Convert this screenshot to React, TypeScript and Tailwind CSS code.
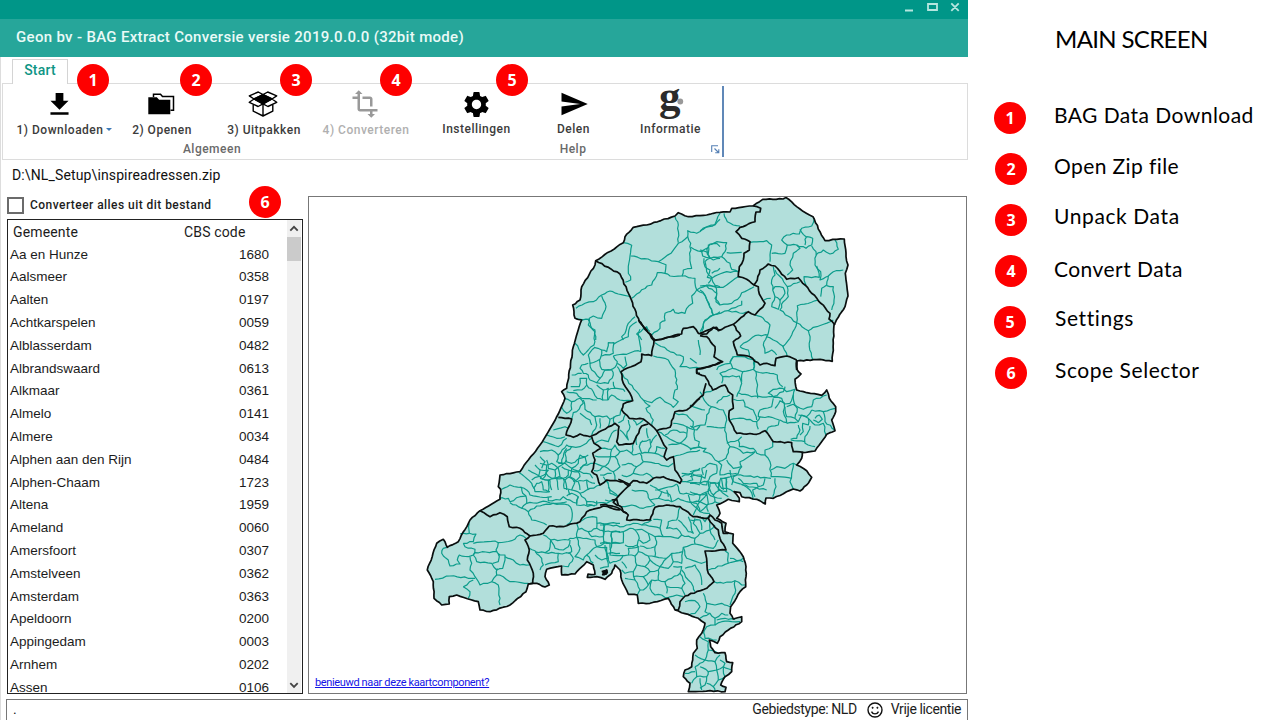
import React from "react";
import { MdFileDownload, MdSettings, MdSend, MdTransform } from "react-icons/md";

type Sheet = { x: number; y: number; municipal: string[]; provincial: string[] };

// Each sheet holds border lines in thirds of a pixel, relative to its own origin.
const sheets: Sheet[] = [
  {
    x: 560,
    y: 190,
    provincial: [
      "107,212 180,252 210,320 238,395 285,450",
      "285,450 365,432 370,415 400,410 415,430 440,432 460,412 480,420",
    ],
    municipal: [
      "190,158 215,166 210,198 205,240 212,270 196,277",
      "212,198 295,215 318,224 315,250 292,248 275,285 262,288 215,325",
      "345,80 355,105 355,158",
      "295,215 333,190 355,160 383,140 383,122 410,130 440,110 465,105 480,88",
      "383,140 392,160 390,200 395,235 370,240 366,258 330,258 315,250",
      "366,258 405,265 410,300 440,285 480,290",
      "392,172 425,185 440,175 450,205 435,215 440,245 455,262 445,280",
      "425,185 428,198 460,210 480,205",
      "440,178 450,162 470,160 480,170",
      "455,250 480,235",
      "440,288 470,310 468,335 480,345",
      "410,300 430,310 445,340 460,375 480,365",
      "410,300 395,318 398,340 380,355 375,370 345,368 340,358 315,370 315,392 300,400 300,415 275,435",
      "460,375 432,395 420,425",
      "48,355 75,340 100,335 125,315 150,303 175,312 212,320",
      "125,318 138,350 125,385 100,378 88,385 85,405 105,420 107,450",
      "48,387 88,388",
      "225,380 205,400 195,430 185,440 190,450",
      "240,418 230,432 245,450",
    ],
  },
  {
    x: 700,
    y: 190,
    provincial: [
      "160,48 182,55 180,66 168,66 165,95 120,112 108,125 125,145 150,155 148,180 132,190 130,210 118,230 115,260 140,268 162,285 175,290 178,312 195,340 188,352 165,375 145,365 100,403 75,412 55,422 50,412 30,418 0,430",
      "162,285 172,270 180,240 205,222 225,228 260,268 295,263 390,370 387,387 405,405",
      "100,403 122,438 100,455 112,495 150,500 180,525 200,520 225,527 228,505 260,498 290,510",
      "0,437 20,440 45,470 42,500 68,515 30,530 0,537",
      "290,510 290,540",
    ],
    municipal: [
      "0,122 45,103 60,70",
      "72,70 82,95 100,105 120,108",
      "150,157 200,152 215,165 210,215",
      "215,190 255,190 262,165 290,165 318,175 335,165 338,145 320,140 315,148 315,165",
      "262,165 245,150 260,135 280,130 298,132 305,115 335,108 343,85",
      "300,118 318,140",
      "290,165 300,175 280,190 270,225 278,240 262,255",
      "335,168 348,185 345,225 362,245 360,270 385,258 400,245 430,240",
      "348,195 370,180 390,192 415,178 405,150",
      "350,228 358,262 312,260 318,285",
      "385,258 380,285 365,295 362,320",
      "380,287 400,290 402,330 395,360",
      "0,180 25,190 25,165 50,155 80,158 75,185 65,200 30,205 20,190",
      "80,188 125,187",
      "65,200 90,220 95,238 115,245",
      "12,205 15,230 30,240 22,262 35,265 80,245 115,245",
      "0,288 35,288 70,292 115,260",
      "35,265 45,285 50,310 45,325 60,345 95,340 120,320 125,308 162,290",
      "0,300 15,315 35,360 40,375 15,390 5,425",
      "40,375 85,362 95,355 125,345 125,332",
      "85,362 130,370 140,365",
      "220,230 225,255 215,270 218,300 225,290 250,293 255,310 240,330 225,320 218,300",
      "225,320 215,350 235,358 240,330",
      "225,240 258,285 262,290 300,275",
      "192,330 212,325",
      "262,290 265,320 250,335 240,360 290,398 325,422 340,412 400,390",
      "355,330 292,347 290,398 275,435 248,470",
      "325,422 330,450 328,470 338,508",
      "165,375 190,385 210,405 205,430 200,440 220,450 248,468 262,500",
      "205,435 165,437 130,460 120,470",
      "200,440 190,465 195,490 215,480 230,495",
      "120,470 145,480 148,500",
      "100,500 90,520 55,530 50,540",
      "100,500 125,500 165,510 160,540",
    ],
  },
  {
    x: 540,
    y: 320,
    provincial: [
      "295,0 342,62 335,107 305,102 303,125 243,155 250,190 270,220 278,242 250,252 245,270 268,295 310,297 350,332 390,322 405,275 440,270 480,235",
      "342,62 420,45",
      "55,292 95,297 78,345 100,352 120,342 150,350 195,328 225,310 237,320 230,365 237,375 280,370 305,318 325,312",
      "155,350 162,370 183,385 158,400 165,420 160,445 155,455 170,465 180,495 200,480 250,485 265,497 280,482 320,490 340,475 370,470 420,490 425,480 405,450 400,410 380,420 372,410 380,385 372,375 360,350 350,332",
      "480,147 470,147 470,160 480,160",
    ],
    municipal: [
      "145,0 152,18 165,35 162,75 145,90 130,105 105,70",
      "162,82 185,90 180,118 150,130 145,105 165,82",
      "185,90 200,95 205,68 222,68 220,100 185,108",
      "222,72 265,50 270,20 290,5",
      "220,108 260,103 295,92 303,95",
      "220,108 232,125 225,142 210,150 185,148 178,118",
      "295,40 302,95",
      "232,130 250,145 260,135 255,110",
      "295,40 320,20 330,35",
      "232,140 240,155 310,240 335,248 360,232 400,262 415,245 400,235 405,210 412,208 405,150 385,120 340,108",
      "345,68 410,105 430,110 428,128 420,140 480,145",
      "310,240 330,258 318,265 340,300 335,318",
      "150,130 155,150 180,175 170,188 150,180 145,165 130,160 120,145 125,135 145,130",
      "180,175 195,150 215,150 220,165 205,190 170,188",
      "95,165 125,160",
      "92,200 118,200 120,175 140,175 140,195 125,210 100,212",
      "140,195 160,215 172,235 188,240 190,210 170,195",
      "190,210 205,205 203,240 188,240",
      "203,210 225,205 220,185",
      "220,205 250,208 255,215",
      "205,240 215,225 240,240 275,242",
      "72,235 95,245 95,268 80,280 65,262",
      "95,245 120,235 130,250 110,275 100,278 95,297",
      "130,240 135,268 165,290 200,288 210,298 240,285 245,265",
      "80,215 110,220 125,235 170,240",
      "165,290 170,315 155,345",
      "180,295 180,325",
      "120,280 150,300 155,315",
      "210,298 205,320",
      "222,290 222,310",
      "255,285 250,300 235,308",
      "265,300 270,320 260,345 265,360 240,330",
      "280,300 290,315 310,300",
      "40,330 75,320 85,325",
      "20,345 50,355 75,350",
      "10,365 55,380 80,355",
      "0,395 35,390 55,405 80,375 95,380 120,380 130,375 155,355",
      "55,405 50,425 65,430 70,410 80,385",
      "95,380 75,400 78,425 95,430 120,415 145,405",
      "0,430 20,435 35,430 55,445 60,470 35,475 18,460 20,435",
      "55,430 75,430 95,445 115,430 120,405 135,410 140,430 120,445",
      "95,445 90,470 75,480 55,470",
      "95,445 130,460 150,462 158,475",
      "90,470 110,485 140,480 165,490",
      "0,475 30,482 35,510",
      "20,460 0,470",
      "50,475 55,510",
      "75,480 80,510",
      "115,485 120,510",
      "140,480 145,510",
      "165,370 185,360 205,365 215,340 230,330",
      "183,385 215,388 225,375 240,395 225,410 165,408",
      "225,410 240,440 220,455 195,440 165,430",
      "215,388 205,430 180,450 162,452",
      "240,395 260,390 280,405 300,400 310,425 290,440 265,430 245,435",
      "280,370 275,400",
      "300,370 305,365 330,358 333,380 325,398 305,400 298,380 308,362",
      "325,398 345,400 370,410",
      "333,370 345,350 350,345",
      "320,325 325,355",
      "290,345 290,375",
      "310,425 345,430 385,440 400,430",
      "290,440 280,460 300,465 320,460 340,475",
      "220,455 225,480",
      "245,465 260,470 280,460",
      "345,400 350,380 375,385",
      "180,465 215,460",
      "355,335 380,350 420,370 440,350 440,320 400,310",
      "440,320 470,330 480,318",
      "405,280 440,285 460,305 455,325",
      "375,345 400,330 440,340",
      "385,375 420,370 450,385 480,380",
      "400,410 420,405 480,390",
      "425,460 455,460 480,445",
      "455,460 458,480 440,485",
      "0,410 15,425 5,445",
    ],
  },
  {
    x: 690,
    y: 340,
    provincial: [
      "20,88 20,98 45,108 68,150 105,135 115,155 128,165 130,205 118,212 118,240 140,280 200,283 225,272 250,305 305,308 310,335 340,337",
      "95,65 75,75 20,88",
      "48,130 40,165 0,200",
    ],
    municipal: [
      "130,50 120,65 128,85 158,95 190,88 193,60",
      "128,85 105,95 90,100 98,110 95,130",
      "98,110 148,108 155,130 140,170",
      "158,95 155,125",
      "190,88 198,95 200,125 203,175",
      "198,95 240,100 262,105 265,125 278,140",
      "145,158 185,170 250,170 280,155 285,140",
      "250,170 235,160 250,148 278,145 290,155 315,148 310,165 300,190 285,192 275,175 250,172",
      "130,178 160,180 165,200 190,210 200,240",
      "250,175 245,200 210,210 205,230 245,232 268,240 265,255 235,262 230,280",
      "120,240 160,235 200,245 205,268",
      "200,245 210,230",
      "255,205 270,182 283,190 280,215 290,248 270,240",
      "290,200 310,193 322,205 315,235 325,245 290,250",
      "285,200 290,230 315,235",
      "310,165 315,195 340,208 365,200 370,180 410,165",
      "365,210 350,230 325,225",
      "365,210 400,215 435,205",
      "375,235 388,225 397,238 385,248 370,240",
      "325,245 335,225 355,235 355,255 338,250 340,275 330,285",
      "355,235 375,255 400,250 408,285",
      "400,215 405,245 435,270",
      "325,255 330,270 320,295 302,298",
      "360,258 355,275 345,290 345,310 375,320",
      "302,300 345,305",
      "25,0 30,45",
      "0,55 20,70",
      "30,155 50,190 65,200 50,225 45,255 10,262 0,258",
      "40,160 70,150",
      "0,195 45,210",
      "65,200 100,210 110,240 105,262 50,260",
      "80,190 100,170 120,165",
      "105,262 110,300 120,320 108,355 85,365 75,360 65,345 40,335 48,325 20,322 0,330",
      "10,262 15,300 28,305 25,320",
      "110,310 145,300 155,290",
      "145,300 148,320 190,325 200,340 225,345 225,330 248,320 248,305",
      "120,320 150,330 160,340 195,335",
      "195,335 150,365 155,380 130,385 110,360",
      "225,345 240,365 243,410",
      "243,390 260,380 285,385 310,370 320,375",
      "310,370 305,400 300,425 310,447",
      "243,410 305,415",
      "90,415 140,405 243,415",
      "155,380 145,400 130,410 125,435",
      "85,365 95,375 90,405 115,400 140,400",
      "35,385 60,370 80,375 80,400 60,410 50,435 30,430 35,405 0,410",
      "35,385 40,405",
      "0,395 30,390",
      "60,430 85,430 95,445 110,445 108,415 90,420 88,435",
      "60,430 55,460 70,470 95,475",
      "35,480 50,460 55,490 30,515 20,500 35,480",
      "110,445 130,455",
      "145,415 160,430 200,430 205,440 188,450 195,470",
      "205,440 220,435 225,415",
      "255,415 258,440 248,470",
      "0,455 30,465 50,460",
      "0,485 20,490 30,515 60,520",
      "0,430 30,435",
      "30,530 45,545 60,525",
      "0,540 30,540 35,570",
      "60,545 60,570",
    ],
  },
  {
    x: 420,
    y: 460,
    provincial: [
      "180,152 210,170 240,158 262,170 268,200 300,205 330,228 370,220 388,198 430,200 480,185 500,155 550,138 600,150",
      "330,228 315,240 328,270 322,300 340,340 338,370 325,372",
      "575,120 590,118 595,135",
      "545,335 560,332 558,342 548,344 552,336",
    ],
    municipal: [
      "148,190 148,220 168,222 160,245 130,250",
      "148,220 120,222",
      "130,250 135,260 165,268 160,285 145,290 118,285 112,300 120,312 90,318 85,300 65,280 70,265 80,262",
      "160,250 225,243 235,248 275,242 300,225 318,235",
      "235,248 228,270 240,285 255,285 255,300 248,325 230,330 215,310 170,305 160,285 165,278 230,275 238,290 235,305 218,310",
      "150,290 155,310 150,330 165,350 180,375 215,365 230,345 232,325",
      "255,290 280,300 300,315 328,315",
      "45,358 90,348 155,355 165,355",
      "130,380 160,360",
      "130,380 150,395 145,415",
      "215,365 235,375 240,435",
      "230,345 250,350 270,365 325,370",
      "245,88 270,75 305,82 308,100 318,108",
      "238,115 265,115 270,125 300,110 318,108 320,130 305,145 270,128",
      "300,82 320,90 330,105 380,112 395,110",
      "320,130 380,125 400,130 440,125",
      "325,155 350,138 400,130 445,135 455,150 455,180 440,195",
      "305,145 325,155 335,180 380,195",
      "298,38 335,70 345,95 390,95",
      "325,30 365,55 385,60 385,95 370,90 365,65 350,70 340,85",
      "345,15 360,30 355,50 335,60",
      "380,0 385,25 405,30 405,55 385,60",
      "405,30 425,15 440,0",
      "405,55 430,55 445,45 445,30 425,20",
      "360,30 385,30 370,55",
      "430,55 432,85 455,90 465,65 445,50",
      "445,30 475,35 480,50 460,65",
      "475,35 490,15 525,10",
      "455,90 480,100 500,90 540,75",
      "385,112 385,122 420,120 430,110 440,118 470,130 475,110 455,100 440,108",
      "480,100 500,125 560,130 575,120",
      "475,110 470,135 525,138",
      "500,122 500,135 530,135 530,122",
      "560,60 570,90 595,110",
      "445,88 450,105",
      "328,265 345,272 365,295 370,315 360,330",
      "370,225 392,240 388,270 375,278 345,275",
      "392,240 445,240 450,235 470,232 475,205 470,190",
      "375,278 415,280 415,305 375,315",
      "392,240 405,265 430,270 445,260 450,240",
      "415,280 450,280 460,295 445,320 428,318",
      "450,255 455,275 445,280",
      "470,232 500,235 525,240 530,260 500,285 490,300 465,290 480,265 470,232",
      "480,185 505,172 530,172 530,205 505,215 485,205 475,208",
      "505,215 515,230 550,230 550,212 530,205",
      "530,190 600,190",
      "550,190 553,250 530,260",
      "553,215 600,215",
      "575,215 575,250 600,250",
      "530,260 560,262 565,295 545,300 525,285",
      "565,280 600,280",
      "500,285 520,310",
      "550,245 575,250 570,270",
    ],
  },
  {
    x: 600,
    y: 470,
    provincial: [
      "55,28 90,45 50,85 40,97 50,105 65,112 70,125 85,135 80,150 150,150 165,112 200,105 240,110 280,140 325,145 340,165 355,180 360,205 378,240 315,243 325,310 342,335 320,355 255,378 240,395 235,420 225,420",
      "0,105 15,103 50,112 80,130",
      "325,145 330,135 345,150 365,160 370,190 385,190",
      "8,305 20,300 22,308 12,314 10,304",
    ],
    municipal: [
      "15,90 45,92",
      "25,50 30,70 55,80",
      "10,20 25,40",
      "65,110 95,105 130,115 165,105",
      "95,60 140,65 150,90 165,105",
      "150,90 175,85 185,65 160,50 150,45",
      "165,60 215,50 230,42",
      "175,85 215,95 235,85 260,95 300,95 320,105 325,125",
      "215,95 210,75 185,65",
      "230,42 240,70 300,75 330,60 325,35 290,38 245,35",
      "300,75 295,95",
      "245,20 275,10 315,25 320,0",
      "325,35 345,38 360,60 340,75 330,60",
      "340,75 345,95 360,100",
      "320,105 345,95",
      "355,35 355,60 380,65 380,25",
      "365,30 370,60",
      "390,0 400,35 430,45 450,60 460,90",
      "425,45 500,60",
      "360,60 385,80",
      "265,75 270,95 290,115 280,135",
      "200,60 205,80",
      "0,165 30,165 70,170 100,160 125,165 155,150",
      "10,185 15,165",
      "35,185 70,185 70,218 35,218 35,185",
      "70,185 90,175 105,180 118,205 112,225 90,230 75,225",
      "0,220 30,220 30,255 85,255 85,235 118,230",
      "15,225 25,290 0,295",
      "20,250 30,280 60,270 70,255",
      "105,180 125,178 145,190 150,210 130,220 118,210",
      "125,165 160,170 180,175 185,150 160,148",
      "145,190 165,200 170,215 165,230 140,235 120,228",
      "165,200 200,200 235,205 245,195 230,175 200,175 205,155 230,150 235,130 240,112",
      "180,175 190,200",
      "235,150 250,165 265,185 280,190 265,140",
      "245,195 285,205 285,222 250,232 248,245 215,250 200,265 165,260 165,230",
      "285,205 300,190 280,160 285,145",
      "300,190 330,180 345,165",
      "285,222 315,230 340,235 355,210",
      "330,180 345,210",
      "250,232 260,265 305,280 318,275",
      "215,250 220,275 245,280 248,245",
      "85,255 105,258 115,245 112,225",
      "115,245 145,258 165,260",
      "105,258 110,285 100,305 75,310 65,300",
      "110,285 135,290 150,270 145,258",
      "150,270 180,290 200,265",
      "135,290 150,305 175,300 180,290 205,295 220,275",
      "100,305 105,330 75,325",
      "100,320 130,320 150,305",
      "105,330 120,360 112,375",
      "130,320 145,345 130,360 120,360",
      "145,345 155,330 175,330 175,300",
      "155,330 150,355 165,375 185,375 205,385",
      "175,330 195,335 200,350 200,370",
      "195,335 215,325 240,310 245,290 220,290",
      "240,310 255,340 245,355 200,350",
      "245,355 255,375",
      "245,300 265,330 280,350 285,365",
      "255,295 285,285 300,310 305,345",
      "200,385 230,375 250,380",
      "65,275 80,295",
      "325,300 385,280 430,265",
      "385,280 385,250 375,242",
      "390,265 430,275",
      "342,335 370,340 405,332 425,345 437,345",
      "405,332 405,370 390,405",
      "310,370 320,400 345,405 365,400 390,410",
      "255,395 285,392 300,410 285,430 265,435",
      "320,400 315,425 330,430 345,445 365,430 385,435",
      "300,445 330,430",
      "345,445 345,465 320,470 310,490",
      "345,465 365,455 395,455 420,455",
      "350,450 375,445 405,448",
      "310,485 315,505 350,510",
      "300,500 325,515 325,540",
      "285,555 315,570 325,540 355,550",
      "285,590 300,580 315,570",
      "315,570 345,575 360,555",
      "345,575 350,600 325,605 300,590",
      "350,600 370,590 395,600",
      "360,570 375,580 370,600 375,620",
      "285,590 290,620 275,640",
      "290,620 320,620 325,605",
      "320,620 315,645 300,655",
      "350,600 355,630 340,650 320,640",
      "355,630 375,620",
      "255,610 285,605",
      "340,650 345,665",
      "300,625 305,660",
    ],
  },
];

const coastline =
  "700,215.7 720,212.3 730,212 731.7,208.3 753,206 762.7,199.3 783,199 786,197.5 800,209 813,216.7 820,231.7 825,240.7 836.7,239.3 844.3,239 846,256.7 848,265 845.3,273.3 848,296 845,306.7 838.3,317.3 834,325 833.3,343.3 832.3,361.3 820,359.3 797,361 797.3,370 801,374 795,379.3 796.7,390 806.7,392.7 821.7,395.3 826.7,390 829.3,398.3 835.7,406.7 835.7,411.7 831.7,420 835,430.7 826.7,434.3 815,451 802.3,452.7 801.7,458.3 796.7,465 806.7,470.7 811.7,477.3 806.7,485 800,491 793.3,489 773.3,498.3 766,498 765.3,504 756.7,499.3 741.7,496.7 740,492.7 734,491.7 739.3,498.3 739.3,501.7 728.3,499.3 716.7,505 720,513.3 716.7,518.3 726,523.3 725,531.7 733.3,534 732.7,543.3 743.3,556.7 746,566.7 745.7,586.7 740,591.7 730.7,606.7 730,613.3 733.3,619 741.7,616.7 741.7,621.7 728.3,630 720,636.7 717.3,643.3 709.3,640 710.7,646.7 715,652.7 725,652.7 726.7,661.7 732.7,662.7 731.7,671.7 725,676.7 720.7,685 726,687.3 725,691.7 710,690.7 688.3,691.7 690,683.3 683.3,676.7 685,670 691.7,666.7 693.3,653.3 697.3,648.3 696.7,640 701.7,633.3 705,623.3 698.3,618.3 675,610 668.3,598.3 650,603.3 638.3,603.3 637.3,595 628.3,594.3 621.7,580 620,570 615,565 611.7,573.3 605,579.3 596.7,576.7 587.3,577.3 588,574.2 595,574.3 593.3,565 586.7,561.7 575,574 561.7,575 561.7,566 546.7,569.3 545,576.7 549.3,585 545,587 536.7,583.3 528.3,584 526,591.7 510,605 490,611.7 480,610 478.3,601.7 456.7,595 449.3,596.7 449.3,604 441.7,605 434,598.3 433.3,581.7 427.3,570 436.7,543.3 443.3,539.3 447.3,547.3 458.3,541.7 470,520 480,510.7 500,499.3 500.7,489.3 498.3,486.7 500,475 520,471.7 528.3,460 540,445 556.7,416.7 565,398.3 561.7,391.7 566.7,388.3 573.3,346.7 581.7,320 575,318.3 572.7,305 580,300 581.7,286.7 595,265 595.7,260.7 623.3,242.7 625,236.7 633.3,227.3 646.7,225 675,216 678.3,212.7 688.3,216.7 700,215.7";

// Joins the points, breaking long runs into slightly uneven steps like surveyed borders.
function trace(points: string, ox: number, oy: number, scale: number, wobble: number) {
  const p = points.split(" ").map((s) => {
    const [x, y] = s.split(",").map(Number);
    return [ox + x * scale, oy + y * scale];
  });
  let d = `M${p[0][0].toFixed(1)} ${p[0][1].toFixed(1)}`;
  for (let i = 1; i < p.length; i++) {
    const [ax, ay] = p[i - 1];
    const [bx, by] = p[i];
    const len = Math.hypot(bx - ax, by - ay);
    const n = Math.max(1, Math.round(len / 3.5));
    for (let k = 1; k < n; k++) {
      const t = k / n;
      const x = ax + (bx - ax) * t;
      const y = ay + (by - ay) * t;
      const off = Math.sin(x * 12.9898 + y * 78.233 + k * 2.1) * wobble;
      d += `L${(x - ((by - ay) / len) * off).toFixed(1)} ${(y + ((bx - ax) / len) * off).toFixed(1)}`;
    }
    d += `L${bx.toFixed(1)} ${by.toFixed(1)}`;
  }
  return d;
}

function NetherlandsMap() {
  const coast = trace(coastline, 0, 0, 1, 0.4);
  return (
    <svg viewBox="309 197 657 496" className="block h-[496px] w-[657px]" fill="none" strokeLinejoin="round">
      <path d={coast + "Z"} fill="#b2dfdb" />
      <g stroke="#0b9c8b" strokeWidth="1.2">
        {sheets.map((s) => s.municipal.map((m, i) => <path key={`${s.x}-${i}`} d={trace(m, s.x, s.y, 1 / 3, 0.7)} />))}
      </g>
      <g stroke="#0a0f0f" strokeWidth="1.7">
        {sheets.map((s) => s.provincial.map((m, i) => <path key={`${s.x}-${i}`} d={trace(m, s.x, s.y, 1 / 3, 0.5)} />))}
        <path d={coast + "Z"} />
      </g>
      <circle cx="605" cy="573" r="2" fill="#0a0f0f" />
    </svg>
  );
}

function Badge({ n, className = "" }: { n: number; className?: string }) {
  return (
    <span
      className={`flex size-8 shrink-0 items-center justify-center rounded-full bg-[#fe0000] pb-px font-['Open_Sans',sans-serif] text-[16px] leading-none font-bold text-white ${className}`}
    >
      {n}
    </span>
  );
}

function FoldersIcon() {
  return (
    <svg width="27" height="22" viewBox="0 0 27 22">
      <path d="M5.5 4V1.2h7l2 2.3h11v13.8h-3" fill="none" stroke="#000" strokeWidth="1.5" />
      <path d="M0.3 4.2h8.5l2.3 2.6h11.2v14.4H0.3z" fill="#000" />
    </svg>
  );
}

function BoxIcon() {
  return (
    <svg width="30" height="26" viewBox="0 0 30 26" fill="none" stroke="#000" strokeWidth="1.4" strokeLinejoin="round">
      <path d="M15 3.6 24 8l-9 4.8L6 8z" fill="#000" />
      <path d="M15 3.6 10.3 1 1.3 4.8 6 8zM15 3.6 19.7 1l9 3.8L24 8zM6 8l-4.7 3.3 8.8 4.2 4.9-2.7zM24 8l4.7 3.3-8.8 4.2-4.9-2.7z" />
      <path d="M5.2 13.8v6.4l9.8 4.8 9.8-4.8v-6.4M15 13v12" />
    </svg>
  );
}

function LogoIcon() {
  return (
    <svg width="34" height="34" viewBox="0 0 34 34" overflow="visible">
      <text x="5" y="23" fontFamily="Liberation Serif, serif" fontWeight="700" fontSize="43" fill="#2b2b2b">g</text>
      <circle cx="26.3" cy="14.5" r="2.9" fill="#999" />
    </svg>
  );
}

function RibbonItem({ icon, label, muted, wide, caret }: { icon: React.ReactNode; label: string; muted?: boolean; wide?: boolean; caret?: boolean }) {
  return (
    <div className={`flex flex-col items-center ${wide ? "w-[102px]" : "w-[97px] "} ${muted ? "text-[#b0b0b0]" : "text-[#3c3c3c]"}`}>
      <div className={`flex h-[37px] items-center justify-center pt-[3px] ${muted ? "text-[#999]" : "text-black"} ${wide ? "pr-[2px]" : ""}`}>{icon}</div>
      <div className={`relative text-[12px] leading-4 font-medium tracking-[0.5px] whitespace-nowrap ${wide ? "mt-px" : ""}`}>
        {label}
        {caret && <span className="absolute top-[6px] -right-[9px] border-x-[3px] border-t-[3px] border-x-transparent border-t-[#3e7ab8]" />}
      </div>
    </div>
  );
}

const towns: [string, string][] = [
  ["Aa en Hunze", "1680"],
  ["Aalsmeer", "0358"],
  ["Aalten", "0197"],
  ["Achtkarspelen", "0059"],
  ["Alblasserdam", "0482"],
  ["Albrandswaard", "0613"],
  ["Alkmaar", "0361"],
  ["Almelo", "0141"],
  ["Almere", "0034"],
  ["Alphen aan den Rijn", "0484"],
  ["Alphen-Chaam", "1723"],
  ["Altena", "1959"],
  ["Ameland", "0060"],
  ["Amersfoort", "0307"],
  ["Amstelveen", "0362"],
  ["Amsterdam", "0363"],
  ["Apeldoorn", "0200"],
  ["Appingedam", "0003"],
  ["Arnhem", "0202"],
  ["Assen", "0106"],
];

function Chevron({ down }: { down?: boolean }) {
  return (
    <svg width="10" height="7" viewBox="0 0 10 7" fill="none" stroke="#444" strokeWidth="1.8">
      <path d={down ? "M1.3 1.2 5 5l3.7-3.8" : "M1.3 5.6 5 1.8l3.7 3.8"} />
    </svg>
  );
}

const legend: { n: number; text: string; row: string; label: string }[] = [
  { n: 1, text: "BAG Data Download", row: "pl-[26px] gap-[28px]", label: "-mt-[6px] tracking-[0.45px]" },
  { n: 2, text: "Open Zip file", row: "pl-[27px] gap-[27px]", label: "-mt-[6px] tracking-[0.4px]" },
  { n: 3, text: "Unpack Data", row: "pl-[27px] gap-[27px]", label: "-mt-[8px] tracking-[0.6px]" },
  { n: 4, text: "Convert Data", row: "pl-[27px] gap-[27px]", label: "-mt-[4px] tracking-[0.45px]" },
  { n: 5, text: "Settings", row: "pl-[26px] gap-[29px]", label: "-mt-[8px] tracking-[0.6px]" },
  { n: 6, text: "Scope Selector", row: "pl-[27px] gap-[28px]", label: "-mt-[6px] tracking-[0.55px]" },
];

export default function App() {
  return (
    <div className="flex h-[720px] w-[1280px] overflow-hidden bg-white font-[Roboto,sans-serif] text-[#1c1c1c]">
      <div className="relative flex h-[720px] w-[968px] shrink-0 flex-col">
        <div className="flex h-[19px] shrink-0 justify-end bg-[#009688] pr-2">
          <svg width="56" height="14" viewBox="0 0 56 14" fill="none" stroke="#b5e6df" strokeWidth="1.8" className="mt-px">
            <path d="M1 9.5h8M24 3h9v6h-9zM47.3 2.3l7.4 7.6M54.7 2.3l-7.4 7.6" />
          </svg>
        </div>
        <div className="flex h-[38px] shrink-0 items-center bg-[#26a69a] pb-px pl-4 text-[15px] font-medium tracking-[0.32px] text-[#eafaf7]">
          Geon bv - BAG Extract Conversie versie 2019.0.0.0 (32bit mode)
        </div>

        <div className="flex min-h-0 flex-1 flex-col border-l border-[#ddd]">
          <div className="flex h-[26px] shrink-0 items-end pl-[11px]">
            <div className="z-10 -mb-px flex h-[25px] w-[56px] justify-center border border-b-0 border-[#d4d4d4] bg-white pt-px text-[14px] leading-[18px] font-medium tracking-[0.2px] text-[#0f9585]">
              Start
            </div>
          </div>
          <div className="ml-px flex h-[77px] shrink-0 border border-[#dcdcdc]">
            <div className="flex w-[418px] flex-col items-center">
              <div className="flex h-[57px] w-full pl-[6px]">
                <RibbonItem wide caret icon={<MdFileDownload size={31} />} label="1) Downloaden" />
                <RibbonItem wide icon={<FoldersIcon />} label="2) Openen" />
                <RibbonItem wide icon={<BoxIcon />} label="3) Uitpakken" />
                <RibbonItem wide muted icon={<MdTransform size={30} />} label="4) Converteren" />
              </div>
              <div className="text-[12px] leading-4 font-medium tracking-[0.5px] text-[#6a6a6a]">Algemeen</div>
            </div>
            <div className="relative my-[2px] flex w-[303px] flex-col items-center border-r-2 border-[#6088b8]">
              <div className="-mt-[2px] flex h-[57px] w-full pl-[7px]">
                <RibbonItem icon={<MdSettings size={31} />} label="Instellingen" />
                <RibbonItem icon={<MdSend size={30} />} label="Delen" />
                <RibbonItem icon={<LogoIcon />} label="Informatie" />
              </div>
              <div className="pl-[3px] text-[12px] leading-4 font-medium tracking-[0.5px] text-[#6a6a6a]">Help</div>
              <svg className="absolute right-[2px] bottom-[3px]" width="9" height="9" viewBox="0 0 9 9" fill="none" stroke="#5580b5" strokeWidth="1.1">
                <path d="M.7 7V.7H7M3.5 3.5 7.5 7.5M7.8 4.2v3.6H4.2" />
              </svg>
            </div>
          </div>

          <div className="flex h-[36px] shrink-0 items-center pb-[6px] pl-[11px] text-[14px] tracking-[0.13px] text-[#111]">D:\NL_Setup\inspireadressen.zip</div>

          <div className="flex h-[498px] shrink-0 gap-[5px] pl-[6px]">
            <div className="flex w-[296px] flex-col">
              <div className="flex h-[23px] items-start gap-[6px]">
                <div className="mt-px size-[17px] border-2 border-[#6b6b6b]" />
                <div className="text-[12px] leading-[18px] font-medium tracking-[0.45px]">Converteer alles uit dit bestand</div>
              </div>
              <div className="flex h-[475px] justify-between overflow-hidden border border-[#222]">
                <div className="w-[261px]">
                  <div className="flex h-[23px] items-center pt-px pl-[5px] text-[14px] tracking-[0.15px]">
                    <span className="w-[171px]">Gemeente</span>
                    <span>CBS code</span>
                  </div>
                  {towns.map(([name, code]) => (
                    <div key={code} className="flex h-[22.8px] items-center justify-between pl-[2px] font-['Liberation_Sans',sans-serif] text-[13.5px] leading-none">
                      <span>{name}</span>
                      <span>{code}</span>
                    </div>
                  ))}
                </div>
                <div className="mr-px flex w-[14px] flex-col items-center justify-between bg-[#f0f0f0] pt-[5px] pb-[4px]">
                  <div className="flex flex-col items-center gap-[5px]">
                    <Chevron />
                    <div className="h-[24px] w-[14px] bg-[#cbcbcb]" />
                  </div>
                  <Chevron down />
                </div>
              </div>
            </div>
            <div className="relative h-[498px] w-[659px] border border-[#777]">
              <NetherlandsMap />
              <a className="absolute bottom-[3px] left-[6px] text-[11px] leading-[15px] tracking-[-0.36px] text-[#1414e6] underline">benieuwd naar deze kaartcomponent?</a>
            </div>
          </div>

          <div className="mt-[5px] ml-[5px] flex h-[30px] w-[962px] shrink-0 items-start justify-between border border-[#777] px-[6px] text-[14px] leading-[19px]">
            <span>.</span>
            <div className="flex items-center tracking-[-0.4px]">
              <span>Gebiedstype: NLD</span>
              <svg className="mr-[8px] ml-[10px]" width="16" height="16" viewBox="0 0 16 16" fill="none" stroke="#111" strokeWidth="1.4">
                <circle cx="8" cy="8" r="7" />
                <path d="M4.5 9.6c1.4 3 5.6 3 7 0" />
                <circle cx="5.6" cy="5.8" r=".7" fill="#111" strokeWidth=".6" />
                <circle cx="10.4" cy="5.8" r=".7" fill="#111" strokeWidth=".6" />
              </svg>
              <span>Vrije licentie</span>
            </div>
          </div>
        </div>

        <Badge n={1} className="absolute top-16 left-[77px] z-20" />
        <Badge n={2} className="absolute top-16 left-[180px] z-20" />
        <Badge n={3} className="absolute top-16 left-[280px] z-20" />
        <Badge n={4} className="absolute top-16 left-[380px] z-20" />
        <Badge n={5} className="absolute top-16 left-[496px] z-20" />
        <Badge n={6} className="absolute top-[186px] left-[249px] z-20" />
      </div>

      <div className="flex w-[312px] flex-col font-[Lato,sans-serif] text-black">
        <h1 className="mt-[23px] mb-[47px] pl-[87px] text-[24px] leading-8 tracking-[-0.65px]">MAIN SCREEN</h1>
        <ul className="flex flex-col gap-[19px]">
          {legend.map((l) => (
            <li key={l.n} className={`flex h-8 items-center ${l.row}`}>
              <Badge n={l.n} />
              <span className={`text-[21px] leading-7 whitespace-nowrap ${l.label}`}>{l.text}</span>
            </li>
          ))}
        </ul>
      </div>
    </div>
  );
}
